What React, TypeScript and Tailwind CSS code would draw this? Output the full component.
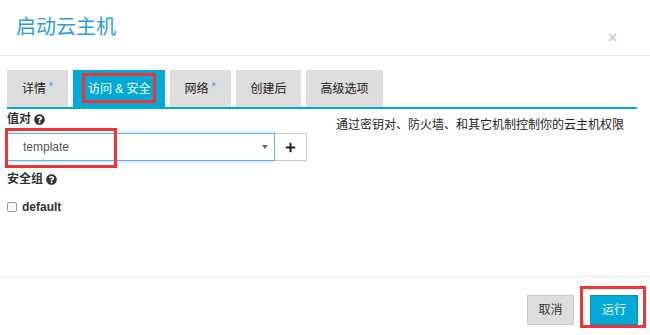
import { FaQuestionCircle, FaPlus } from 'react-icons/fa';

const font = 'font-["Liberation_Sans","Noto_Sans_CJK_SC",sans-serif]';

function Tab({ label, star = false, active = false }: { label: string; star?: boolean; active?: boolean }) {
  return (
    <div
      className={`flex h-[37px] items-center pl-[15px] text-[12px] ${star ? 'pr-[15px]' : 'pr-[14px]'} ${
        active ? 'bg-[#01aad6] text-white' : 'bg-[#dddddd] text-[#222]'
      }`}
    >
      {label}
      {star && <span className="ml-[3px] -mt-[4px] text-[10px] font-bold text-[#6fa8dc]">*</span>}
    </div>
  );
}

export default function App() {
  return (
    <div className={`relative flex h-[335px] w-[650px] flex-col bg-white ${font}`}>
      {/* header */}
      <div className="flex h-[56px] shrink-0 justify-between border-b border-[#e5e5e5]">
        <div className="pl-[16px] pt-[13px] text-[20px] leading-[28px] text-[#2a9fd6]">启动云主机</div>
        <div className="pr-[33px] pt-[29px] text-[16px] font-bold leading-[18px] text-[#cfcfcf]">×</div>
      </div>

      {/* body */}
      <div className="flex-1 pl-[7px] pr-[13px] pt-[14px]">
        <div className="flex h-[39px] gap-[5px] border-b-2 border-[#01aad6]">
          <Tab label="详情" star />
          <Tab label="访问 & 安全" active />
          <Tab label="网络" star />
          <Tab label="创建后" />
          <Tab label="高级选项" />
        </div>

        <div className="flex">
          <div className="w-[300px]">
            <div className="mt-[1px] flex items-center gap-[3px] text-[12px] font-bold leading-[18px] text-[#333]">
              值对 <FaQuestionCircle className="h-[11px] w-[11px] text-[#333]" />
            </div>
            <div className="mt-[5px] flex h-[28px]">
              <div className="flex w-[268px] items-center justify-between border border-[#66afe9] pl-[15px] pr-[6px] text-[12px] text-[#555] shadow-[0_0_5px_rgba(102,175,233,0.5)]">
                template
                <span className="h-0 w-0 border-x-[3px] border-t-[4px] border-x-transparent border-t-[#666]" />
              </div>
              <div className="flex w-[32px] items-center justify-center border border-l-0 border-[#cccccc] bg-white">
                <FaPlus className="h-[11px] w-[11px] text-[#222]" />
              </div>
            </div>
            <div className="mt-[9px] flex items-center gap-[3px] text-[12px] font-bold leading-[18px] text-[#333]">
              安全组 <FaQuestionCircle className="h-[11px] w-[11px] text-[#333]" />
            </div>
            <div className="mt-[11px] flex items-center gap-[5px] text-[12px] font-bold leading-[16px] text-[#333]">
              <span className="h-[10px] w-[10px] rounded-[2px] border border-[#9a9a9a] bg-[#f8f8f8]" />
              default
            </div>
          </div>
          <div className="pl-[29px] pt-[8px] text-[12px] leading-[16px] text-[#222]">
            通过密钥对、防火墙、和其它机制控制你的云主机权限
          </div>
        </div>
      </div>

      {/* footer */}
      <div className="flex h-[59px] shrink-0 items-start justify-end gap-[16px] border-t border-[#e5e5e5] pr-[12px] pt-[18px]">
        <button className="h-[30px] w-[47px] border border-[#cccccc] bg-[#dddddd] text-[12px] text-[#333]">取消</button>
        <button className="h-[30px] w-[48px] border border-[#0a8fbf] bg-[#01aad6] text-[12px] text-white">运行</button>
      </div>

      {/* red annotation boxes */}
      <div className="pointer-events-none absolute left-[82px] top-[73px] h-[30px] w-[74px] border-[3px] border-[#ee3535]" />
      <div className="pointer-events-none absolute left-[5px] top-[128px] h-[40px] w-[112px] border-[3px] border-[#ee3535]" />
      <div className="pointer-events-none absolute left-[580px] top-[286px] h-[42px] w-[66px] border-[3px] border-[#ee3535]" />
    </div>
  );
}
